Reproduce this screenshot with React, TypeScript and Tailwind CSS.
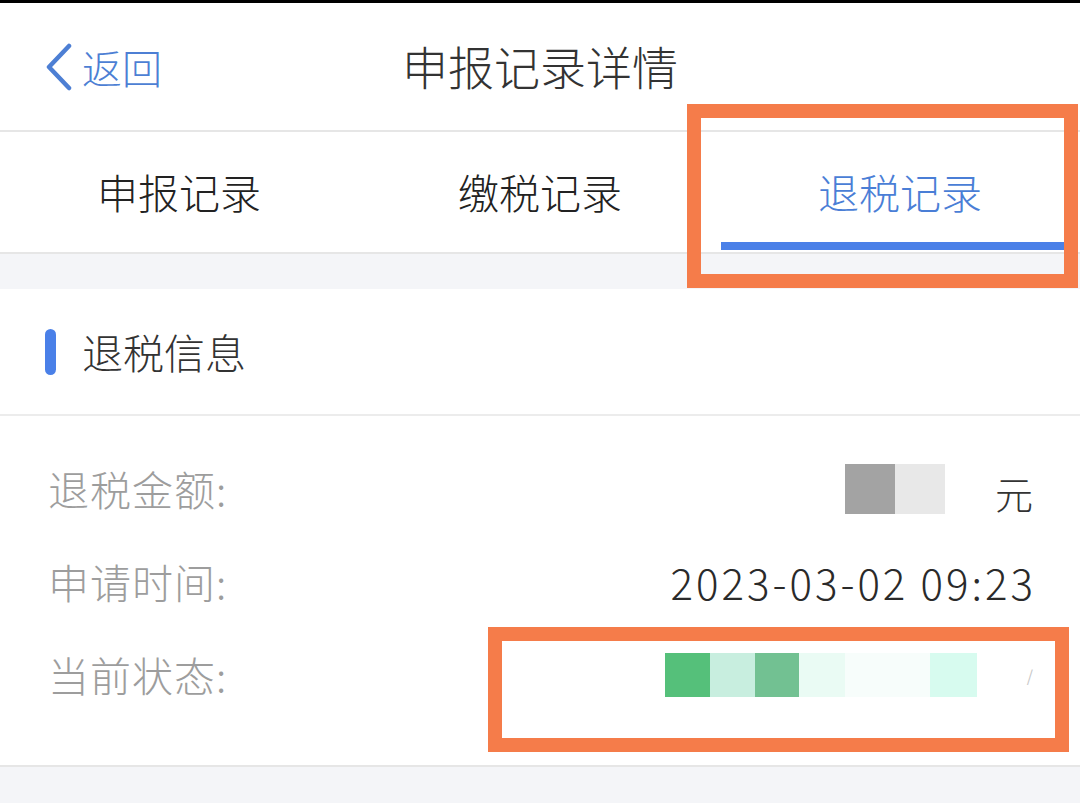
import React from "react";

const FONT = { fontFamily: '"Noto Sans CJK SC", "Noto Sans", sans-serif' };

function Row({ label, children }: { label: string; children?: React.ReactNode }) {
  return (
    <div className="h-[93px] flex items-center justify-between pl-[48px] pr-[47px]">
      <span className="text-[41px] text-[#9d9d9d] leading-none font-light tracking-[1px]">{label}</span>
      <div className="flex items-center">{children}</div>
    </div>
  );
}

export default function App() {
  return (
    <div className="w-[1080px] h-[803px] bg-[#f4f5f8] relative overflow-hidden" style={FONT}>
      <div className="h-[3px] bg-black" />

      {/* nav bar */}
      <div className="h-[129px] bg-white grid grid-cols-[1fr_auto_1fr] items-center border-b-2 border-[#e6e6e6]">
        <div className="flex items-center pl-[44px] gap-[8px] text-[#4d7fd4]">
          <svg width="30" height="48" viewBox="0 0 30 48" fill="none">
            <polyline points="25,3 5,24 25,45" stroke="#4d7fd4" strokeWidth="4.5" strokeLinecap="round" strokeLinejoin="round" />
          </svg>
          <span className="text-[40px] leading-none font-light">返回</span>
        </div>
        <div className="text-[46px] text-[#333] leading-none font-light pb-[4px]">申报记录详情</div>
        <div />
      </div>

      {/* tabs */}
      <div className="h-[122px] bg-white grid grid-cols-3 border-b-2 border-[#e6e6e6]">
        <div className="flex items-center justify-center text-[41px] text-[#222] font-light pr-[2px]">申报记录</div>
        <div className="flex items-center justify-center text-[41px] text-[#222] font-light">缴税记录</div>
        <div className="relative flex items-center justify-center text-[41px] text-[#4a7ed6] font-light">
          退税记录
          <div className="absolute left-[1px] right-[12px] bottom-[2px] h-[8px] bg-[#4a80e8]" />
        </div>
      </div>

      <div className="h-[35px]" />

      {/* section header */}
      <div className="h-[127px] bg-white flex items-center pl-[45px] gap-[26px] border-b-2 border-[#ececec]">
        <div className="w-[11px] h-[46px] rounded-full bg-[#4a80e8]" />
        <span className="text-[41px] text-[#333] leading-none font-light">退税信息</span>
      </div>

      {/* rows */}
      <div className="bg-white pt-[26px] pb-[44px] border-b-2 border-[#e6e6e6]">
        <Row label="退税金额:">
          <div className="flex items-center">
            <div className="w-[50px] h-[50px] bg-[#a3a3a3]" />
            <div className="w-[50px] h-[50px] bg-[#e8e8e8]" />
            <div className="w-[50px]" />
            <span className="text-[38px] text-[#333] leading-none font-light pt-[8px]">元</span>
          </div>
        </Row>
        <Row label="申请时间:">
          <span className="text-[42px] text-[#2a2a2a] leading-none font-light tracking-[3px] mr-[-3px]">2023-03-02 09:23</span>
        </Row>
        <Row label="当前状态:">
          <div className="flex items-center">
            <div className="w-[45px] h-[44px] bg-[#55c07a]" />
            <div className="w-[45px] h-[44px] bg-[#c8eedf]" />
            <div className="w-[44px] h-[44px] bg-[#72c192]" />
            <div className="w-[46px] h-[44px] bg-[#eafbf4]" />
            <div className="w-[85px] h-[44px] bg-[#f7fdfb]" />
            <div className="w-[47px] h-[44px] bg-[#d7fbef]" />
            <div className="w-[56px] h-[44px] flex items-center justify-end">
              <span className="text-[#c8c8c8] text-[16px] leading-none">/</span>
            </div>
          </div>
        </Row>
      </div>

      {/* annotation boxes */}
      <div className="absolute left-[687px] top-[104px] w-[391px] h-[184px] border-[14px] border-[#f57c4a]" />
      <div className="absolute left-[488px] top-[627px] w-[581px] h-[125px] border-[14px] border-[#f57c4a]" />
    </div>
  );
}
